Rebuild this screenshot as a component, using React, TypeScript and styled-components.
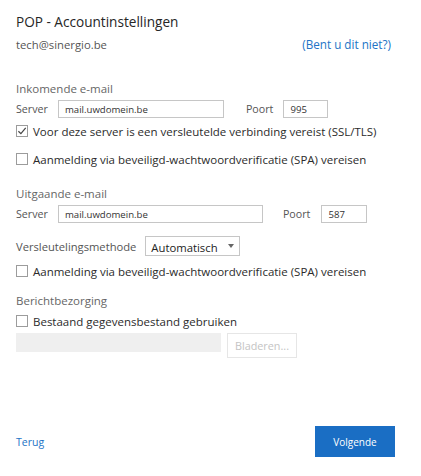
import React from 'react';
import styled, { createGlobalStyle } from 'styled-components';

const GlobalStyle = createGlobalStyle`
  body {
    margin: 0;
    background: #fff;
    font-family: "Segoe UI", "Open Sans", "Noto Sans", sans-serif;
  }
`;

const Page = styled.div`
  width: 421px;
  height: 476px;
  box-sizing: border-box;
  padding: 11px 30px 0 16px;
  display: flex;
  flex-direction: column;
  color: #333;
  white-space: nowrap;
`;

const Title = styled.h1`
  margin: 0;
  font-size: 13.6px;
  font-weight: 400;
  line-height: 22px;
  color: #262626;
`;

const AccountRow = styled.div`
  display: flex;
  justify-content: space-between;
  align-items: center;
  height: 22px;
  font-size: 11.3px;
  color: #555;
`;

const Link = styled.a<{ $size: number }>`
  color: #2273c6;
  text-decoration: none;
  font-size: ${(p) => p.$size}px;
`;

const SectionTitle = styled.div<{ $top: number }>`
  margin-top: ${(p) => p.$top}px;
  font-size: 11.5px;
  line-height: 18px;
  color: #666;
`;

const FieldRow = styled.div<{ $top: number }>`
  display: flex;
  align-items: center;
  margin-top: ${(p) => p.$top}px;
  height: 20px;
`;

const Label = styled.span<{ $gap: number; $size?: number }>`
  font-size: ${(p) => p.$size ?? 10.7}px;
  color: #555;
  margin-right: ${(p) => p.$gap}px;
`;

const TextBox = styled.div<{ $width: number; $after?: number }>`
  width: ${(p) => p.$width}px;
  height: 18px;
  box-sizing: border-box;
  border: 1px solid #c6c6c6;
  display: flex;
  align-items: center;
  padding: 1px 0 0 6px;
  font-size: 9.6px;
  color: #333;
  margin-right: ${(p) => p.$after ?? 0}px;
`;

const CheckRow = styled.label<{ $top: number }>`
  display: flex;
  align-items: center;
  margin-top: ${(p) => p.$top}px;
  height: 16px;
  font-size: 11.5px;
  color: #2b2b2b;
`;

const Box = styled.span`
  width: 12px;
  height: 12px;
  box-sizing: border-box;
  border: 1px solid #9c9c9c;
  margin-right: 5px;
  display: inline-flex;
  align-items: center;
  justify-content: center;
  flex-shrink: 0;
`;

const Select = styled.div`
  width: 95px;
  height: 20px;
  box-sizing: border-box;
  border: 1px solid #c6c6c6;
  display: flex;
  align-items: center;
  justify-content: space-between;
  padding: 2px 5px 0 5px;
  font-size: 11.3px;
  color: #222;
`;

const Caret = styled.span`
  width: 0;
  height: 0;
  border-left: 3.5px solid transparent;
  border-right: 3.5px solid transparent;
  border-top: 4px solid #666;
  margin-top: -2px;
`;

const BrowseRow = styled.div`
  display: flex;
  align-items: flex-start;
  margin-top: 4px;
`;

const DisabledInput = styled.div`
  width: 205px;
  height: 19px;
  background: #efefef;
`;

const BrowseButton = styled.div`
  width: 70px;
  height: 25px;
  box-sizing: border-box;
  margin-left: 6px;
  border: 1px solid #e6e6e6;
  display: flex;
  align-items: center;
  justify-content: center;
  font-size: 10.8px;
  color: #c4c4c4;
`;

const Footer = styled.div`
  display: flex;
  justify-content: space-between;
  align-items: center;
  margin-top: auto;
  margin-bottom: 19px;
`;

const PrimaryButton = styled.button`
  width: 80px;
  height: 31px;
  border: none;
  background: #1a6ec4;
  color: #fff;
  font-family: inherit;
  font-size: 10px;
  margin-right: -4px;
`;

const Check = () => (
  <svg width="10" height="10" viewBox="0 0 10 10">
    <path d="M1.4 5.3 L3.9 7.7 L8.7 1.9" fill="none" stroke="#444" strokeWidth="1.2" />
  </svg>
);

const App = () => (
  <>
    <GlobalStyle />
    <Page>
      <Title>POP - Accountinstellingen</Title>
      <AccountRow>
        <span>tech@sinergio.be</span>
        <Link href="#" $size={11.7}>(Bent u dit niet?)</Link>
      </AccountRow>

      <SectionTitle $top={25}>Inkomende e-mail</SectionTitle>
      <FieldRow $top={1}>
        <Label $gap={10}>Server</Label>
        <TextBox $width={166} $after={22}>mail.uwdomein.be</TextBox>
        <Label $gap={10}>Poort</Label>
        <TextBox $width={45}>995</TextBox>
      </FieldRow>
      <CheckRow $top={4}>
        <Box><Check /></Box>
        Voor deze server is een versleutelde verbinding vereist (SSL/TLS)
      </CheckRow>
      <CheckRow $top={12}>
        <Box />
        Aanmelding via beveiligd-wachtwoordverificatie (SPA) vereisen
      </CheckRow>

      <SectionTitle $top={18}>Uitgaande e-mail</SectionTitle>
      <FieldRow $top={1}>
        <Label $gap={10}>Server</Label>
        <TextBox $width={205} $after={20}>mail.uwdomein.be</TextBox>
        <Label $gap={11}>Poort</Label>
        <TextBox $width={46}>587</TextBox>
      </FieldRow>
      <FieldRow $top={12}>
        <Label $gap={9} $size={11.2}>Versleutelingsmethode</Label>
        <Select>
          Automatisch
          <Caret />
        </Select>
      </FieldRow>
      <CheckRow $top={7}>
        <Box />
        Aanmelding via beveiligd-wachtwoordverificatie (SPA) vereisen
      </CheckRow>

      <SectionTitle $top={13}>Berichtbezorging</SectionTitle>
      <CheckRow $top={3}>
        <Box />
        Bestaand gegevensbestand gebruiken
      </CheckRow>
      <BrowseRow>
        <DisabledInput />
        <BrowseButton>Bladeren...</BrowseButton>
      </BrowseRow>

      <Footer>
        <Link href="#" $size={10.5}>Terug</Link>
        <PrimaryButton>Volgende</PrimaryButton>
      </Footer>
    </Page>
  </>
);

export default App;
